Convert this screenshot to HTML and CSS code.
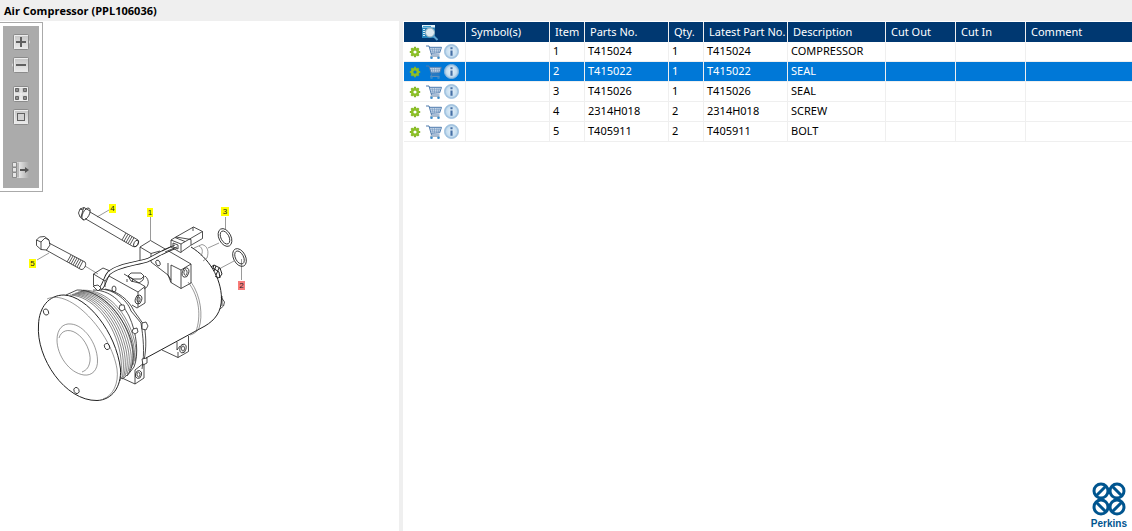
FILE: index.html
```html
<!DOCTYPE html>
<html lang="en">
<head>
<meta charset="utf-8">
<title>Air Compressor (PPL106036)</title>
<link rel="stylesheet" href="styles.css">
</head>
<body>
<svg class="defs" aria-hidden="true">
  <defs>
    <linearGradient id="btn" x1="0" y1="0" x2="0" y2="1"><stop offset="0" stop-color="#c4c4c4"/><stop offset="1" stop-color="#ececec"/></linearGradient>
    <linearGradient id="fade"><stop offset="0" stop-color="#f0f0f0"/><stop offset="1" stop-color="#ababab"/></linearGradient>
    <radialGradient id="ball"><stop offset="0" stop-color="#e8f2fa"/><stop offset=".7" stop-color="#c6def0"/><stop offset="1" stop-color="#8db5d8"/></radialGradient>
    <symbol id="gear" viewBox="0 0 12 12">
      <path d="M6 .8V11.2M.8 6H11.2M2.3 2.3L9.7 9.7M9.7 2.3L2.3 9.7" stroke="#82b526" stroke-width="2.2"/>
      <circle cx="6" cy="6" r="3" fill="none" stroke="#8dc026" stroke-width="2.2"/>
      <circle class="gear-hole" cx="6" cy="6" r="1.6"/>
    </symbol>
    <symbol id="cart" viewBox="0 0 16 14">
      <path d="M3.5 2H15L13.5 7.500H5.300Z" fill="#d3e0ee"/>
      <path d="M0 1H3L5.500 10H13.500M3 2.300H15.500L13.700 7.800L5 8.300" fill="none" stroke="#4f7bad"/>
      <path d="M6 2.500L7 8M8.500 2.500V8M11 2.500L10.500 8M13.200 2.500L12.200 8M4 4.300H14.500M4.500 6.200H14" fill="none" stroke="#7095bf" stroke-width=".6"/>
      <path d="M5.500 10L4.500 11.500H13.500" fill="none" stroke="#8a9bb0" stroke-width=".7"/>
      <circle cx="5.500" cy="12.700" r="1.300" fill="#3c8bc9"/><circle cx="12.500" cy="12.700" r="1.300" fill="#3c8bc9"/>
    </symbol>
    <symbol id="info" viewBox="0 0 14 14">
      <circle cx="7" cy="7" r="6.600" fill="url(#ball)" stroke="#9fc0dd" stroke-width=".7"/>
      <path d="M6 3H8V4.800H6ZM6 6H8V11H6Z" fill="#456fa5"/>
    </symbol>
  </defs>
</svg>

<header class="titlebar"><h1 class="title">Air Compressor (PPL106036)</h1></header>

<main class="panes">
  <section class="viewer" aria-label="Illustration">
    <div class="toolframe">
      <div class="toolbar">
        <button class="tool" aria-label="Zoom in">
          <svg width="18" height="16" viewBox="-1 0 18 16"><path d="M15 4L17 8L15 12" fill="#e4e4e4"/><rect x=".5" y=".5" width="15" height="15" rx="1" fill="url(#btn)" stroke="#8b8b8b"/><path d="M1.500 15V1.500H15" fill="none" stroke="#eee"/><path d="M3 8H13M8 3V13" stroke="#606060" stroke-width="2"/></svg>
        </button>
        <button class="tool" aria-label="Zoom out">
          <svg width="18" height="16" viewBox="-1 0 18 16"><path d="M1 4L-1 8L1 12" fill="#e4e4e4"/><rect x=".5" y=".5" width="15" height="15" rx="1" fill="url(#btn)" stroke="#8b8b8b"/><path d="M1.500 15V1.500H15" fill="none" stroke="#eee"/><path d="M3 8H13" stroke="#606060" stroke-width="2"/></svg>
        </button>
        <button class="tool tool-fit" aria-label="Fit to window">
          <svg width="16" height="16" viewBox="0 0 16 16"><rect x=".5" y=".5" width="15" height="15" rx="1" fill="url(#btn)" stroke="#8b8b8b"/><path d="M1.500 14.500V1.500H14.500V14.500ZM8 2V14M2 8H14" fill="none" stroke="#f0f0f0"/><path d="M2.500 2.500h3v3h-3zM10.500 2.500h3v3h-3zM2.500 10.500h3v3h-3zM10.500 10.500h3v3h-3z" fill="#8f8f8f" stroke="#666"/></svg>
        </button>
        <button class="tool" aria-label="Actual size">
          <svg width="16" height="16" viewBox="0 0 16 16"><rect x=".5" y=".5" width="15" height="15" rx="1" fill="url(#btn)" stroke="#8b8b8b"/><path d="M1.500 15V1.500H15" fill="none" stroke="#eee"/><rect x="4.500" y="4.500" width="7" height="7" fill="#d2d2d2" stroke="#606060"/></svg>
        </button>
        <button class="tool tool-panel" aria-label="Toggle panel">
          <svg width="18" height="16" viewBox="0 0 18 16"><rect x="5" y="0" width="12" height="16" fill="url(#fade)"/><path d="M.5 .5h4v4.500h-4zM.5 5.500h4v4.500h-4zM.5 10.500h4v5h-4z" fill="#e6e6e6" stroke="#8b8b8b"/><path d="M6 .500V15.500" stroke="#888"/><path d="M8 8H14" stroke="#555" stroke-width="2"/><path d="M13 5L17 8L13 11Z" fill="#555"/></svg>
        </button>
      </div>
    </div>

    <svg class="drawing" width="230" height="205" viewBox="24 200 230 205" role="img" aria-label="Exploded view of the air compressor">
      <g class="leader">
        <path d="M97 217L109 210M150.500 217V240M225.500 217V229M241.500 259V280M37 260L49 253M85 266L98 274M208 248L219 243M219 269L234 261"/>
      </g>
      <g class="line">
        <!-- item 4: flanged screw -->
        <path d="M90 212L138 240M85 218.500L133 246.500M138 240C140 242 137 248 133 246.500"/>
        <ellipse cx="136" cy="243.500" rx="2" ry="3.500" transform="rotate(28 136 243.500)"/>
        <path d="M80 209L84 207.500L90 211M78.500 213L80 209L83 210L84 207.500M78.500 213L80 217L84 220M83 210L81 217"/>
        <ellipse cx="86" cy="214" rx="3.200" ry="6.500" transform="rotate(28 86 214)"/>
        <path class="thread" d="M126 233L122 240M128 234.300L124 241.300M130 235.500L126 242.500M132 236.600L128 243.600M134 237.700L130 244.700"/>
        <!-- item 5: hex bolt -->
        <path d="M49 243L85 262M46 250L81 269.500M85 262C87 265 84 270 81 269.500"/>
        <path d="M36.500 240L39.500 237L44.500 236.500L49 240L50 245L46.500 250L41 249.500L36.500 245.500ZM36.500 240L41 242L45 238L49 240M41 242V249.500"/>
        <path class="thread" d="M71 255L67 262M73 256L69 263M75 257L71 264M77 258L73 265M79 259L75 266M81 260L77 267M83 261L79 268.500"/>
        <!-- items 2 and 3: seals -->
        <ellipse cx="225" cy="237.500" rx="6" ry="9.500" transform="rotate(-27 225 237.500)"/>
        <ellipse cx="225" cy="237.500" rx="4" ry="7" transform="rotate(-27 225 237.500)"/>
        <ellipse cx="239.500" cy="257.500" rx="6" ry="9.500" transform="rotate(-27 239.500 257.500)"/>
        <ellipse cx="239.500" cy="257.500" rx="4" ry="7" transform="rotate(-27 239.500 257.500)"/>
        <!-- compressor housing -->
        <path class="heavy" d="M191 247C209 258 221 278 221.500 298C221.500 312 215 320 205 326L146 358"/>
        <path class="thin" d="M191 282C201 296 203 316 199 328C198 331 194 334 190 335M188 282C200 297 201 318 196 331"/>
        <path d="M221 297L224.500 302L223.500 306L220 309M222 296V306"/>
        <path class="thin" d="M194 248L202 244.500C208 246 209 252 207 258L203 261M199 246C203 248 203 252 201 256"/>
        <path class="heavy" d="M211 267L214 265L220 268L222 274L219 278L215 276M214 265L213 268L219 272L220 278M216 266L214 271M219 268L216 275"/>
        <!-- rear mounting block -->
        <path d="M140 247L150.500 240.500L191 264V283L181 288.500L171 282.500V265M140 247L151 253.500V262M140 247V262M151 253.500L160 251M171 265L181 270L191 264M181 270V288.500M168 263V275L171 280M151 262L168 275L171 282.500"/>
        <ellipse cx="185.500" cy="272.500" rx="3.200" ry="4.800" transform="rotate(15 185.500 272.500)"/><ellipse cx="185.500" cy="272.500" rx="1.600" ry="2.800"/>
        <ellipse cx="158" cy="263" rx="2" ry="3" transform="rotate(-25 158 263)"/>
        <!-- cable and connector -->
        <path class="cable" d="M175 247C166 250 158 255 148 260C136 264 118 265 109 273C105 277 105 285 100 289"/>
        <path class="cable-core" d="M175 247C166 250 158 255 148 260C136 264 118 265 109 273C105 277 105 285 100 289"/>
        <path class="solid" d="M171 240L175 237.500L193.500 227L202.500 231.500V238.500L190.500 245.500L180.500 252.500L171 247Z"/>
        <path d="M171 240L181 244L202.500 231.500M181 244V252.500M175 237.500L185 241.500M193 227V231M176 237L191 239.500V245M173 243L178 245V249L173 247ZM162 251L175 245M165 252L177 247"/>
        <!-- front mounting block -->
        <path d="M93.500 274L103 268L110 271M93.500 274L105 281V287M93.500 274V285L98 288M109 276L138 292L145 286.500V303L137 308L132 305M138 292V307M145 286.500L124 274M105 281L109 276"/>
        <ellipse cx="138.500" cy="299.500" rx="3.200" ry="4.500" transform="rotate(15 138.500 299.500)"/><ellipse cx="138.500" cy="299.500" rx="1.600" ry="2.600"/>
        <ellipse cx="114" cy="289" rx="2" ry="3"/>
        <path d="M128 276L131 273H141L144 276L143 280L139 283L131 281ZM128 276L133 279H141L144 276M133 279L132 282M145 276C150 280 149 287 144 289M127 282V279"/>
        <!-- lower lugs -->
        <path d="M162 350L178 357.500L188.500 351.500V336M178 357.500V352M177 342V350L180 346"/>
        <ellipse cx="183" cy="348.500" rx="3" ry="4.500" transform="rotate(15 183 348.500)"/><ellipse cx="183" cy="348.500" rx="1.500" ry="2.600"/>
        <path d="M122 378L135 384L144 378V362M135 384V370L144 363"/>
        <ellipse cx="138.500" cy="374.500" rx="3" ry="4" transform="rotate(15 138.500 374.500)"/><ellipse cx="138.500" cy="374.500" rx="1.500" ry="2.300"/>
        <!-- front flange -->
        <path d="M97 289C112 288 127 299 131 311L141 323C143 336 145 352 142 369M105 289C118 291 129 300 134 311L144 325C147 340 146 353 143 365M93 290C110 290 121 301 129 316C137 333 139 355 134 367L127 376"/>
        <path class="solid" d="M142 323L146 322L148 326L146 330L142 329ZM142 359L147 358L147 363L143 365ZM133 329L137 328L138 332L135 334L132 332ZM120 305L124 305L125 309L122 311L119 309ZM93 286L98 285L101 288L98 291Z"/>
        <!-- pulley -->
        <path class="solid" d="M66 295L77 290C98 289 122 312 131 340C136 358 133 373 122 379Z"/>
      </g>
      <g class="groove">
        <path d="M70 295C92 296 112 320 119 348C122 360 122 372 120 381"/>
        <path d="M72 294.400C94 295.200 114 319.200 121 347.200C124 359 124 370 122 379"/>
        <path d="M73.500 293.800C96 294.400 116 318.400 123 346.400C126 358 126 368 123.500 377.500"/>
        <path d="M75 293.200C98 293.600 118 317.600 125 345.600C128 357 128 367 125 376"/>
        <path d="M76.500 292.600C100 292.800 120 316.800 127 344.800C130 356 130 365 127 374"/>
        <path d="M78 292C102 292 122 316 129 344C132 355 132 363 129 371"/>
        <path d="M79.500 291.400C104 291.200 124 315.200 131 343.200C134 354 133 361 131 368"/>
        <path d="M81 290.800C106 290.400 126 314.400 133 342.400C135 352 135 359 133 365"/>
        <path d="M83 290.200C108 289.600 128 313.600 134.500 341C136.500 350 136.500 356 135 361"/>
      </g>
      <g class="line">
        <path class="solid heavy" d="M38.500 325C39 307 49 295 64 295C87 296 116 332 120.500 369C121.500 387 112 400 97 400.500C65 401 36 358 38.500 325Z"/>
        <path class="thin" d="M47 299C70 288 111 332 117 369C119 383 113 396 103 399"/>
        <path class="thin" d="M57 340C57 329 63 323 71 324C84 325 97 343 97.500 360C98 370 92 376 84 375C69 373 57 355 57 340Z"/>
        <path class="thin" d="M59 338C61 331 68 328 76 333C86 339 91 353 90 361C89 367 87 370 82 372"/>
        <ellipse cx="46" cy="312" rx="2.500" ry="3.200" transform="rotate(-25 46 312)"/>
        <ellipse cx="107" cy="346.500" rx="2.500" ry="3.200" transform="rotate(-25 107 346.500)"/>
        <ellipse cx="76.500" cy="390.500" rx="2.500" ry="3.200" transform="rotate(-25 76.500 390.500)"/>
      </g>
      <g class="callouts">
        <rect x="109" y="204" width="7" height="9"/><text x="112.500" y="211">4</text>
        <rect x="147" y="208" width="6" height="9"/><text x="150" y="215">1</text>
        <rect x="221" y="207" width="8" height="9"/><text x="225" y="214">3</text>
        <rect x="29" y="259" width="7" height="9"/><text x="32.500" y="266">5</text>
        <rect class="active" x="238" y="281" width="7" height="9"/><text x="241.500" y="288">2</text>
      </g>
    </svg>
  </section>

  <section class="parts" aria-label="Parts list">
    <table class="grid">
      <colgroup><col class="c-icons"><col class="c-wide"><col class="c-narrow"><col class="c-wide"><col class="c-narrow"><col class="c-wide"><col class="c-desc"><col class="c-cut"><col class="c-cut"><col></colgroup>
      <thead>
        <tr>
          <th class="find"><svg width="18" height="17" viewBox="0 0 18 17" role="img" aria-label="Find"><path d="M1 1H14V14H1Z" fill="#2584bb"/><path d="M1 1H14V3.500H1Z" fill="#e3f3fa"/><path d="M2 2.500H10" stroke="#3a9ccc"/><path d="M2 5.500H4M2 7.500H4M2 9.500H4M2 11.500H4" stroke="#d5ecf6"/><circle cx="9" cy="8.500" r="4.500" fill="#dce9ef" stroke="#8fabba"/><path d="M12.500 12L16.500 16" stroke="#5ba3d0" stroke-width="2"/></svg></th>
          <th>Symbol(s)</th><th>Item</th><th>Parts No.</th><th>Qty.</th><th>Latest Part No.</th><th>Description</th><th>Cut Out</th><th>Cut In</th><th>Comment</th>
        </tr>
      </thead>
      <tbody>
        <tr><td><div class="actions"><svg class="gear"><use href="#gear"/></svg><svg class="cart"><use href="#cart"/></svg><svg class="info"><use href="#info"/></svg></div></td><td></td><td>1</td><td>T415024</td><td>1</td><td>T415024</td><td>COMPRESSOR</td><td></td><td></td><td></td></tr>
        <tr class="selected"><td><div class="actions"><svg class="gear"><use href="#gear"/></svg><svg class="cart"><use href="#cart"/></svg><svg class="info"><use href="#info"/></svg></div></td><td></td><td>2</td><td>T415022</td><td>1</td><td>T415022</td><td>SEAL</td><td></td><td></td><td></td></tr>
        <tr><td><div class="actions"><svg class="gear"><use href="#gear"/></svg><svg class="cart"><use href="#cart"/></svg><svg class="info"><use href="#info"/></svg></div></td><td></td><td>3</td><td>T415026</td><td>1</td><td>T415026</td><td>SEAL</td><td></td><td></td><td></td></tr>
        <tr><td><div class="actions"><svg class="gear"><use href="#gear"/></svg><svg class="cart"><use href="#cart"/></svg><svg class="info"><use href="#info"/></svg></div></td><td></td><td>4</td><td>2314H018</td><td>2</td><td>2314H018</td><td>SCREW</td><td></td><td></td><td></td></tr>
        <tr><td><div class="actions"><svg class="gear"><use href="#gear"/></svg><svg class="cart"><use href="#cart"/></svg><svg class="info"><use href="#info"/></svg></div></td><td></td><td>5</td><td>T405911</td><td>2</td><td>T405911</td><td>BOLT</td><td></td><td></td><td></td></tr>
      </tbody>
    </table>
    <div class="brand">
      <svg width="34" height="34" viewBox="0 0 34 34" aria-hidden="true">
        <g class="loops"><circle cx="9" cy="9" r="7"/><circle cx="25" cy="9" r="7"/><circle cx="9" cy="25" r="7"/><circle cx="25" cy="25" r="7"/><path d="M4 14L14 4M20 4L30 14M4 20L14 30M20 30L30 20"/></g>
      </svg>
      <span class="brand-name">Perkins</span>
    </div>
  </section>
</main>
</body>
</html>
```
FILE: styles.css
```css
* { box-sizing: border-box; }
html, body { height: 100%; }
body {
  margin: 0;
  display: flex;
  flex-direction: column;
  background: #fff;
  color: #000;
  font-family: "Noto Sans", "Open Sans", sans-serif;
  font-size: 11px;
}
.defs { position: absolute; width: 0; height: 0; }

.titlebar { background: #efefef; height: 21px; padding-left: 4px; flex: none; }
.title { margin: 0; font-family: "Open Sans", sans-serif; font-size: 11px; line-height: 22px; font-weight: 700; }

.panes { flex: 1; display: flex; min-height: 0; }
.viewer { flex: none; width: 399px; padding-top: 1px; }
.toolframe { width: 43px; padding: 3px; border: 1px solid #aaa; border-left: 0; }
.toolbar { display: flex; flex-direction: column; align-items: center; background: #ababab; padding: 8px 0 10px; gap: 7px; }
.tool { display: flex; border: 0; padding: 0; background: none; cursor: pointer; }
.tool-fit { margin-top: 6px; }
.tool-panel { margin-top: 30px; }

.drawing { display: block; margin: 8px 0 0 24px; }
.line { fill: none; stroke: #222; stroke-width: .8; stroke-linejoin: round; }
.line .thin, .leader { stroke-width: .6; stroke: #555; fill: none; }
.line .solid { fill: #fff; }
.line .heavy { stroke-width: 1; }
.line .thread { stroke-width: .9; stroke: #444; }
.line .cable { stroke-width: 4; }
.line .cable-core { stroke: #fff; stroke-width: 2.4; }
.groove { fill: none; stroke: #333; stroke-width: .6; }
.callouts rect { fill: #ff0; }
.callouts .active { fill: #f77c7c; }
.callouts text { font: 8px "Liberation Sans", Arial, sans-serif; text-anchor: middle; fill: #222; }

.parts {
  flex: 1;
  min-width: 0;
  display: flex;
  flex-direction: column;
  justify-content: space-between;
  border-left: 4px solid #efefef;
  padding: 1px 0 0 1px;
}
.grid { width: 100%; table-layout: fixed; border-collapse: separate; border-spacing: 0; }
.c-icons { width: 62px; }
.c-wide { width: 84px; }
.c-narrow { width: 35px; }
.c-desc { width: 98px; }
.c-cut { width: 70px; }
.grid th, .grid td { height: 20px; padding: 0; text-align: left; font-weight: 400; line-height: 18px; white-space: nowrap; overflow: hidden; }
.grid th { background: #003871; color: #fff; padding-left: 5px; border-right: 1px solid #efefef; }
.grid .find { padding-left: 17px; }
.grid .find svg { display: block; }
.grid td { padding: 0 0 2px 3px; line-height: 17px; border-right: 1px solid #efefef; border-bottom: 1px solid #efefef; }
.grid td:first-child { padding-bottom: 0; }
.grid th:last-child, .grid td:last-child { border-right: 0; }
.selected td { background: #0078d7; color: #fff; }
.actions { display: flex; align-items: center; padding-left: 2px; height: 18px; }
.gear { width: 12px; height: 12px; fill: #fff; }
.selected .gear { fill: #0078d7; }
.cart { width: 16px; height: 14px; margin: 0 2px 0 5px; }
.info { width: 15px; height: 15px; }

.brand { align-self: flex-end; display: flex; flex-direction: column; align-items: center; gap: 1px; padding-right: 5px; color: #00558f; }
.brand svg { display: block; }
.brand-name { font: 700 10px/14px "Liberation Sans", Arial, sans-serif; }
.loops { fill: none; stroke: #00558f; stroke-width: 3; }
```
